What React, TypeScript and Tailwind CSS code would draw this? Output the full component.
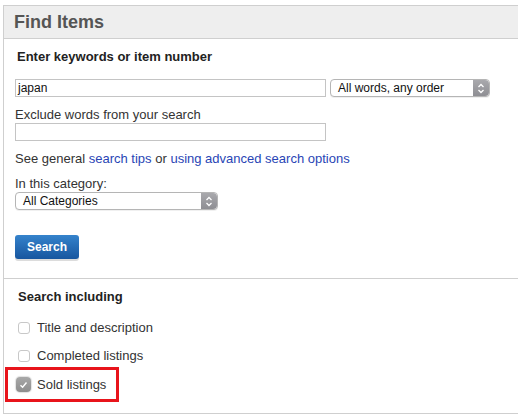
function Caret() {
  return (
    <span className="flex h-full w-[16px] items-center justify-center rounded-r-[4px] bg-gradient-to-b from-[#a9a9ad] to-[#8e8e93]">
      <svg width="8" height="11" viewBox="0 0 8 11" fill="none" stroke="white" strokeWidth="1.3">
        <path d="M1.5 4 L4 1.5 L6.5 4" />
        <path d="M1.5 7 L4 9.5 L6.5 7" />
      </svg>
    </span>
  );
}

function Select({ label, width }: { label: string; width: string }) {
  return (
    <div
      className={`flex h-[18px] items-center justify-between rounded-[4px] border border-[#b5b5b5] bg-white pl-[7px] text-[12px] leading-none text-[#111] shadow-[0_1px_0_rgba(0,0,0,0.06)] ${width}`}
    >
      <span>{label}</span>
      <Caret />
    </div>
  );
}

function Box() {
  return <span className="inline-block h-[12px] w-[12px] rounded-[3px] border border-[#c8c8c8] bg-white" />;
}

export default function App() {
  return (
    <div className="h-[420px] w-[518px] overflow-hidden bg-white font-['Liberation_Sans',Arial,sans-serif] text-[#333]">
      <div className="ml-[3px] mt-[5px] border-l border-t border-[#cfcfcf]">
        {/* Header */}
        <div className="flex h-[33px] items-center border-b border-[#cfcfcf] bg-[#eeeeee] pl-[10px] text-[18px] font-bold text-[#555]">
          Find Items
        </div>

        {/* Keywords */}
        <div className="border-b border-[#cfcfcf] pb-[19px] pl-[11px] pt-[10px]">
          <div className="pl-[2px] text-[13px] font-bold leading-[16px] text-[#222]">
            Enter keywords or item number
          </div>
          <div className="mt-[14px] flex items-center gap-[4px]">
            <div className="flex h-[18px] w-[311px] items-center border border-[#c4c4c4] px-[2px] text-[12px] text-[#111]">
              japan
            </div>
            <Select label="All words, any order" width="w-[160px]" />
          </div>
          <div className="mt-[10px] text-[13px] leading-[16px] text-[#333]">Exclude words from your search</div>
          <div className="h-[18px] w-[311px] border border-[#c4c4c4]" />
          <div className="mt-[10px] text-[13px] leading-[16px] text-[#333]">
            See general <span className="text-[#2945b5]">search tips</span> or{" "}
            <span className="text-[#2945b5]">using advanced search options</span>
          </div>
          <div className="mt-[9px] text-[13px] leading-[16px] text-[#333]">In this category:</div>
          <Select label="All Categories" width="w-[203px]" />
          <button className="mt-[25px] flex h-[24px] w-[64px] items-center justify-center rounded-[3px] bg-gradient-to-b from-[#3583cc] to-[#17569f] text-[12px] font-bold text-white shadow-[0_2px_0_#dcdcdc]">
            Search
          </button>
        </div>

        {/* Search including */}
        <div className="border-b border-[#cfcfcf] pb-[11px] pt-[10px]">
          <div className="pl-[14px] text-[13px] font-bold leading-[16px] text-[#222]">Search including</div>
          <div className="mt-[15px] flex items-center gap-[7px] pl-[14px] text-[13px] leading-[16px] text-[#333]">
            <Box />
            Title and description
          </div>
          <div className="mt-[12px] flex items-center gap-[7px] pl-[14px] text-[13px] leading-[16px] text-[#333]">
            <Box />
            Completed listings
          </div>
          <div className="ml-[1px] mt-[3px] flex h-[35px] w-[114px] items-center gap-[6px] border-[3px] border-[#e8141b] pl-[8px] text-[13px] text-[#333]">
            <span className="flex h-[15px] w-[15px] items-center justify-center rounded-[4px] bg-gradient-to-b from-[#a8a8a8] to-[#8d8d8d] shadow-[0_0_1px_1px_rgba(0,0,0,0.12)]">
              <svg width="9" height="8" viewBox="0 0 9 8" fill="none" stroke="white" strokeWidth="1.4">
                <path d="M1.5 4.2 L3.6 6.3 L7.5 1.5" />
              </svg>
            </span>
            Sold listings
          </div>
        </div>
      </div>
    </div>
  );
}
